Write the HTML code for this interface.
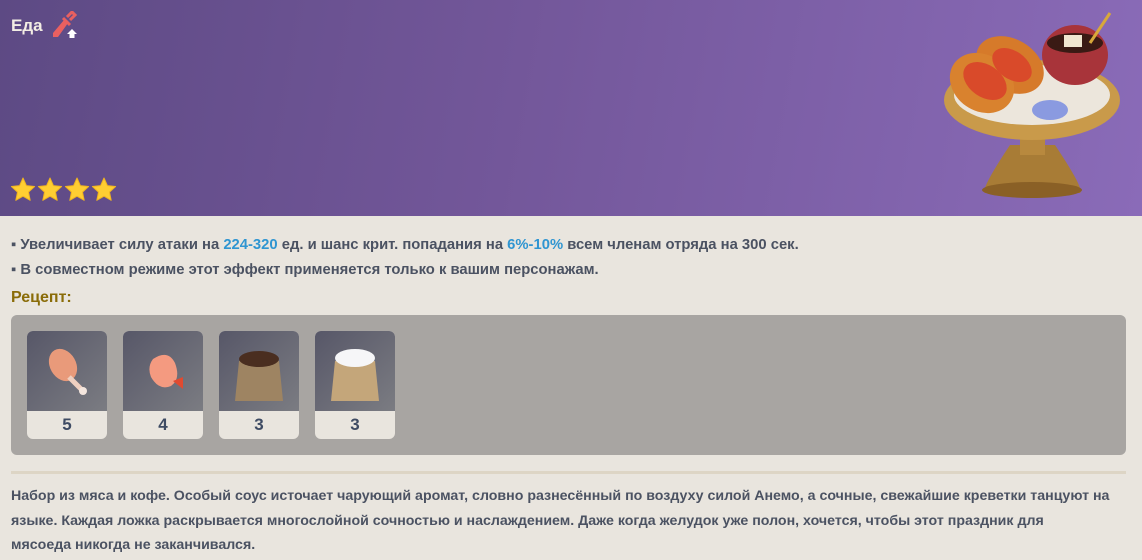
<!DOCTYPE html>
<html><head><meta charset="utf-8"><style>
*{margin:0;padding:0;box-sizing:border-box}
body{width:1142px;height:560px;overflow:hidden;background:#e9e5de;font-family:"Liberation Sans",sans-serif;font-weight:bold;color:#4b5262}
.hdr{position:absolute;left:0;top:0;width:1142px;height:216px;background:linear-gradient(100deg,#5d4a84 0%,#73579a 45%,#8a6bb8 100%)}
.title{position:absolute;left:11px;top:16px;color:#f3ede4;font-size:17px}
.stars{position:absolute;left:10px;top:177px}
.t{position:absolute;left:11px;font-size:14.8px;white-space:nowrap}
.b{color:#2f95d1}
.rec{position:absolute;left:11px;top:289px;color:#8a6c08;font-size:16px}
.box{position:absolute;left:11px;top:315px;width:1115px;height:140px;background:#a8a5a2;border-radius:6px}
.card{position:absolute;top:16px;width:80px;height:108px;border-radius:6px;overflow:hidden;background:#e9e5de}
.card .im{height:80px;background:linear-gradient(135deg,#575768,#7b7c82)}
.card .n{height:28px;text-align:center;line-height:28px;font-size:17px;color:#3e4b63}
.sep{position:absolute;left:11px;top:471px;width:1115px;height:3px;background:#ddd5c5}
.desc{position:absolute;left:11px;top:484px;width:1125px;font-size:14.2px;line-height:24.5px;white-space:nowrap}
</style></head><body>
<div class="hdr">
<div class="title">Еда</div>
<svg style="position:absolute;left:50px;top:11px" width="30" height="28" viewBox="0 0 30 28">
<path d="M3 22 L14 9 L18 12 L8 26 L3 26 Z" fill="#e96060"/><path d="M13 7 L20 14 M17 6 L22 1 L25 4 L20 9" stroke="#e96060" stroke-width="3" fill="none"/>
<path d="M22 18 L27 23 L24.5 23 L24.5 27 L19.5 27 L19.5 23 L17 23 Z" fill="#fff"/></svg>
<div class="stars">
<svg width="112" height="26" viewBox="0 0 112 26"><defs><path id="s" d="M13 1 L16.4 8.6 L24.6 9.5 L18.5 15.1 L20.2 23.3 L13 19.2 L5.8 23.3 L7.5 15.1 L1.4 9.5 L9.6 8.6 Z" fill="#ffce32" stroke="#f0b420" stroke-width="1" stroke-linejoin="round"/></defs>
<use href="#s"/><use href="#s" x="27"/><use href="#s" x="54"/><use href="#s" x="81"/></svg></div>
<svg style="position:absolute;left:940px;top:5px" width="185" height="195" viewBox="0 0 185 195">
<path d="M70 140 Q40 185 45 188 L140 188 Q145 185 115 140 Z" fill="#a87c36"/>
<ellipse cx="92" cy="185" rx="50" ry="8" fill="#8a6026"/>
<rect x="80" y="120" width="25" height="30" fill="#b8893e"/>
<ellipse cx="92" cy="95" rx="88" ry="40" fill="#c99a4a"/>
<ellipse cx="92" cy="90" rx="78" ry="30" fill="#ece6dc"/>
<ellipse cx="135" cy="50" rx="33" ry="30" fill="#a8343a"/>
<ellipse cx="135" cy="38" rx="28" ry="10" fill="#3a1a14"/>
<rect x="124" y="30" width="18" height="12" fill="#f0e6d0"/>
<path d="M150 38 L170 8" stroke="#d8a83a" stroke-width="3"/>
<ellipse cx="70" cy="60" rx="36" ry="26" transform="rotate(30 70 60)" fill="#d67a2a"/>
<ellipse cx="42" cy="78" rx="34" ry="28" transform="rotate(35 42 78)" fill="#d9822e"/>
<ellipse cx="45" cy="76" rx="24" ry="16" transform="rotate(35 45 76)" fill="#d94a2a"/>
<ellipse cx="72" cy="60" rx="22" ry="14" transform="rotate(35 72 60)" fill="#d94a2a"/>
<ellipse cx="110" cy="105" rx="18" ry="10" fill="#8a9ae0"/>
</svg>
</div>
<div class="t" style="top:237px">▪ Увеличивает силу атаки на <span class="b">224-320</span> ед. и шанс крит. попадания на <span class="b">6%-10%</span> всем членам отряда на 300 сек.</div>
<div class="t" style="top:262px">▪ В совместном режиме этот эффект применяется только к вашим персонажам.</div>
<div class="rec">Рецепт:</div>
<div class="box">
<div class="card" style="left:16px"><div class="im"><svg width="80" height="80" viewBox="0 0 80 80"><ellipse cx="36" cy="34" rx="13" ry="17" transform="rotate(-30 36 34)" fill="#e99a7a"/><path d="M42 46 L54 58" stroke="#f0d0c0" stroke-width="5"/><circle cx="56" cy="60" r="4" fill="#f4e6de"/></svg></div><div class="n">5</div></div>
<div class="card" style="left:112px"><div class="im"><svg width="80" height="80" viewBox="0 0 80 80"><path d="M30 28 Q45 18 52 32 Q58 48 48 55 Q36 60 28 46 Q24 36 30 28Z" fill="#f49a80"/><path d="M50 50 L60 46 L60 58 Z" fill="#e04a30"/></svg></div><div class="n">4</div></div>
<div class="card" style="left:208px"><div class="im"><svg width="80" height="80" viewBox="0 0 80 80"><path d="M20 30 L60 30 L64 70 L16 70 Z" fill="#9e8462"/><ellipse cx="40" cy="28" rx="20" ry="8" fill="#4a2e20"/></svg></div><div class="n">3</div></div>
<div class="card" style="left:304px"><div class="im"><svg width="80" height="80" viewBox="0 0 80 80"><path d="M20 30 L60 30 L64 70 L16 70 Z" fill="#c4a67a"/><ellipse cx="40" cy="27" rx="20" ry="9" fill="#f6f6f8"/></svg></div><div class="n">3</div></div>
</div>
<div class="sep"></div>
<div class="desc">Набор из мяса и кофе. Особый соус источает чарующий аромат, словно разнесённый по воздуху силой Анемо, а сочные, свежайшие креветки танцуют на<br>языке. Каждая ложка раскрывается многослойной сочностью и наслаждением. Даже когда желудок уже полон, хочется, чтобы этот праздник для<br>мясоеда никогда не заканчивался.</div>
</body></html>
